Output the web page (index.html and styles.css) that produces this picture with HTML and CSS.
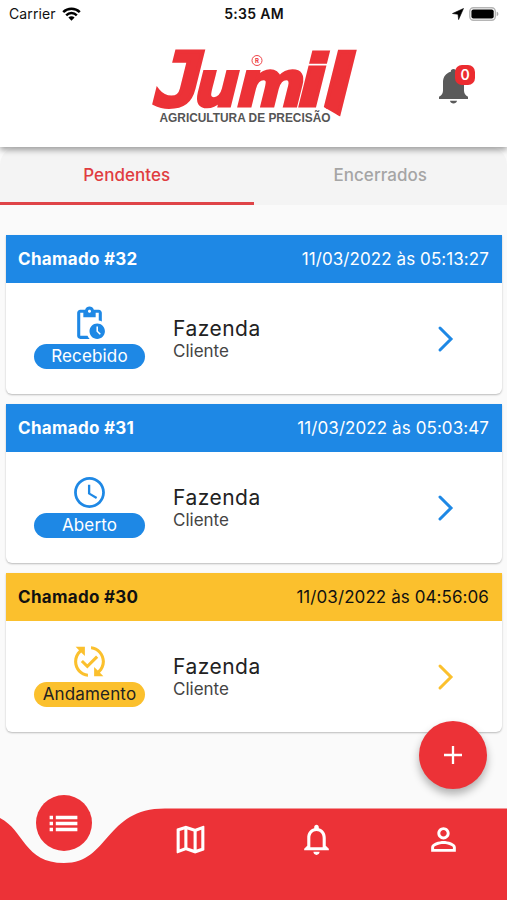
FILE: index.html
```html
<!DOCTYPE html>
<html lang="pt-BR">
<head>
<meta charset="utf-8">
<meta name="viewport" content="width=device-width, initial-scale=1">
<title>Jumil</title>
<link rel="stylesheet" href="styles.css">
</head>
<body>
<div class="app">
  <header class="top">
    <div class="status">
      <div class="carrier"><span>Carrier</span>
        <svg width="19" height="14" viewBox="0 0 19 14"><g fill="none" stroke="#000" stroke-width="2.5"><path d="M1.2 5.1a11.8 11.8 0 0 1 16.6 0"/><path d="M4.2 8.3a7.5 7.5 0 0 1 10.6 0"/></g><path d="M6.4 10.6a4.4 4.4 0 0 1 6.2 0L9.5 13.8z"/></svg>
      </div>
      <div class="time">5:35 AM</div>
      <div class="power">
        <svg width="12" height="12" viewBox="0 0 12 12"><path d="M11.5.5 6.6 11.6 6 6.3.5 5.5z" stroke="#000" stroke-width=".6"/></svg>
        <svg width="31" height="14" viewBox="0 0 31 14"><rect x=".8" y=".8" width="25.5" height="12.4" rx="3.6" fill="#fff" stroke="#b5b5b5" stroke-width="1.4"/><rect x="2.4" y="2.4" width="22.3" height="9.2" rx="2"/><path d="M27.7 4.8c2.2.6 2.2 3.8 0 4.4z" fill="#aaa"/></svg>
      </div>
    </div>
    <div class="brand">
      <svg class="logo" width="210" height="80" viewBox="0 0 210 80">
        <clipPath id="slant"><path d="M0 0H210V82L191 72 172 61H0z"/></clipPath>
        <g class="wordmark">
          <text class="initial" transform="translate(-.5 60.500) skewX(-14) scale(1.020 .95)">J</text>
          <text transform="translate(41 60.500) skewX(-14) scale(.78 .8)">u</text>
          <text transform="translate(83.500 60.500) skewX(-14) scale(.82 .8)">m</text>
          <text transform="translate(143.500 60.500) skewX(-14) scale(1.030 .9)">i</text>
          <g clip-path="url(#slant)"><text transform="translate(166 72) skewX(-14) scale(1.080 1.090)">l</text></g>
        </g>
        <circle cx="107" cy="15.500" r="5" fill="none" stroke="#ec3237" stroke-width=".9"/>
        <text class="reg" x="107" y="17.700" text-anchor="middle">R</text>
        <text class="tagline" x="9.500" y="77" textLength="171" lengthAdjust="spacingAndGlyphs">AGRICULTURA DE PRECISÃO</text>
      </svg>
      <div class="alerts">
        <svg width="30" height="36" viewBox="0 0 30 36"><path fill="#5a5a5a" d="M14.500 0c1.700 0 2.700 1.100 2.700 2.700C22 4 25 7.800 25 13v8.500c0 2.500 1 4.500 4 6.300V30H0v-2.200c3-1.800 4-3.800 4-6.300V13C4 7.800 7 4 11.800 2.700 11.800 1.100 12.800 0 14.500 0zM11 31.800h7c-.5 3.500-6.500 3.500-7 0z"/></svg>
        <span class="badge">0</span>
      </div>
    </div>
  </header>

  <nav class="tabs">
    <div class="tab active">Pendentes</div>
    <div class="tab">Encerrados</div>
  </nav>

  <main class="list">
    <article class="card blue">
      <div class="card-head"><b>Chamado #32</b><span>11/03/2022 às 05:13:27</span></div>
      <div class="card-body">
        <div class="state">
          <svg width="37" height="37" viewBox="0 0 24 24"><path d="M17 12c-2.760 0-5 2.240-5 5s2.240 5 5 5 5-2.240 5-5-2.240-5-5-5zm1.650 7.350L16.500 17.200V14h1v2.790l1.850 1.850-.7.710zM18 3h-3.180C14.400 1.840 13.300 1 12 1s-2.400.84-2.820 2H6c-1.100 0-2 .9-2 2v15c0 1.100.9 2 2 2h6.110c-.59-.57-1.070-1.250-1.420-2H6V5h2v3h8V5h2v5.080c.71.1 1.380.31 2 .6V5c0-1.100-.9-2-2-2zm-6 2c-.55 0-1-.45-1-1s.45-1 1-1 1 .45 1 1-.45 1-1 1z"/></svg>
          <span class="pill">Recebido</span>
        </div>
        <div class="info"><div class="farm">Fazenda</div><div class="client">Cliente</div></div>
        <svg class="chevron" width="18" height="28" viewBox="0 0 18 28"><path d="m3 3 11 11L3 25"/></svg>
      </div>
    </article>
    <article class="card blue">
      <div class="card-head"><b>Chamado #31</b><span>11/03/2022 às 05:03:47</span></div>
      <div class="card-body">
        <div class="state">
          <svg width="37" height="37" viewBox="0 0 24 24"><path d="M11.990 2C6.470 2 2 6.480 2 12s4.470 10 9.990 10C17.520 22 22 17.520 22 12S17.520 2 11.990 2zM12 20.200c-4.530 0-8.200-3.670-8.200-8.200S7.470 3.800 12 3.800s8.200 3.670 8.200 8.200-3.670 8.200-8.200 8.200zM12.500 7H11v6l5.250 3.150.75-1.230-4.500-2.670z"/></svg>
          <span class="pill">Aberto</span>
        </div>
        <div class="info"><div class="farm">Fazenda</div><div class="client">Cliente</div></div>
        <svg class="chevron" width="18" height="28" viewBox="0 0 18 28"><path d="m3 3 11 11L3 25"/></svg>
      </div>
    </article>
    <article class="card yellow">
      <div class="card-head"><b>Chamado #30</b><span>11/03/2022 às 04:56:06</span></div>
      <div class="card-body">
        <div class="state">
          <svg width="37" height="37" viewBox="0 0 24 24"><path d="M17.660 9.530l-7.070 7.070-4.240-4.240 1.410-1.410 2.830 2.830 5.660-5.660 1.410 1.410zM4 12c0-2.330 1.020-4.420 2.620-5.880L9 8.500v-6H3l2.200 2.200C3.240 6.520 2 9.110 2 12c0 5.190 3.950 9.450 9 9.950v-2.020c-3.940-.49-7-3.860-7-7.930zm18 0c0-5.190-3.950-9.450-9-9.950v2.020c3.940.49 7 3.860 7 7.930 0 2.330-1.020 4.420-2.620 5.880L15 15.500v6h6l-2.200-2.200c1.960-1.820 3.200-4.410 3.200-7.300z"/></svg>
          <span class="pill">Andamento</span>
        </div>
        <div class="info"><div class="farm">Fazenda</div><div class="client">Cliente</div></div>
        <svg class="chevron" width="18" height="28" viewBox="0 0 18 28"><path d="m3 3 11 11L3 25"/></svg>
      </div>
    </article>
  </main>

  <button class="fab" aria-label="Novo chamado"><svg width="18" height="18" viewBox="0 0 18 18"><path d="M9 0v18M0 9h18" stroke="#fff" stroke-width="2.300"/></svg></button>

  <footer class="bottom">
    <svg class="wave" width="507" height="92" viewBox="0 0 507 92"><path fill="#ec3237" d="M0 10C24 22 24 55 64 55 110 55 104 .5 165 .5H507V92H0z"/></svg>
    <div class="items">
      <div class="item"><span class="current"><svg width="37" height="37" viewBox="0 0 24 24"><path d="M3 7h2.200v2.200H3zm0 3.900h2.200v2.200H3zm0 3.900h2.200V17H3zM7 7h14v2.200H7zm0 3.900h14v2.200H7zm0 3.900h14V17H7z"/></svg></span></div>
      <div class="item"><svg width="37" height="37" viewBox="0 0 24 24"><path d="M20.500 3l-.16.03L15 5.100 9 3 3.360 4.900c-.21.07-.36.25-.36.48V20.500c0 .28.22.5.5.5l.16-.03L9 18.900l6 2.100 5.640-1.900c.21-.07.36-.25.36-.48V3.500c0-.28-.22-.5-.5-.5zM10 5.470l4 1.400v11.660l-4-1.400V5.470zm-5 .99l3-1.010v11.700l-3 1.160V6.460zm14 11.080l-3 1.010V6.860l3-1.160v11.840z"/></svg></div>
      <div class="item"><svg width="37" height="37" viewBox="0 0 24 24"><path d="M12 22c1.100 0 2-.9 2-2h-4c0 1.100.9 2 2 2zm6-6v-5c0-3.070-1.630-5.640-4.500-6.320V4c0-.83-.67-1.500-1.500-1.500s-1.500.67-1.500 1.500v.68C7.640 5.360 6 7.920 6 11v5l-2 2v1h16v-1l-2-2zm-2 1H8v-6c0-2.480 1.510-4.500 4-4.500s4 2.020 4 4.500v6z"/></svg></div>
      <div class="item"><svg width="37" height="37" viewBox="0 0 24 24"><path d="M12 5.900c1.160 0 2.100.94 2.100 2.100s-.94 2.100-2.100 2.100S9.900 9.160 9.900 8s.94-2.100 2.100-2.100m0 9c2.970 0 6.100 1.460 6.100 2.100v1.100H5.900V17c0-.64 3.130-2.100 6.100-2.100M12 4C9.790 4 8 5.790 8 8s1.790 4 4 4 4-1.790 4-4-1.790-4-4-4zm0 9c-2.670 0-8 1.340-8 4v3h16v-3c0-2.660-5.330-4-8-4z"/></svg></div>
    </div>
  </footer>
</div>
</body>
</html>
```
FILE: styles.css
```css
* { box-sizing: border-box; }
body { margin: 0; font-family: Inter, "Liberation Sans", sans-serif; color: #222; }
svg { display: block; flex: none; }
.app { position: relative; display: flex; flex-direction: column; width: 507px; height: 900px; overflow: hidden; background: #fafafa; }

.top { position: relative; z-index: 1; height: 147px; background: #fff; box-shadow: 0 3px 6px rgba(0,0,0,.36); }
.status { display: grid; grid-template-columns: 1fr auto 1fr; align-items: center; height: 27px; padding: 0 7px 0 9px; color: #111; }
.carrier { display: flex; align-items: center; gap: 6px; font-size: 14px; letter-spacing: .1px; }
.time { font-size: 14px; font-weight: 600; letter-spacing: .3px; transform: translateX(-.5px); }
.power { display: flex; justify-content: flex-end; align-items: center; gap: 5px; }
.brand { display: flex; justify-content: space-between; padding: 18px 32px 0 150px; }
.logo { overflow: visible; }
.wordmark { font: 700 79px "DejaVu Sans", sans-serif; fill: #ec3237; stroke: #ec3237; stroke-width: 3.5px; stroke-linejoin: miter; }
.initial { font-family: "DejaVu Sans Mono", monospace; stroke-width: 4px; }
.reg { font: 700 6px Inter, sans-serif; fill: #ec3237; }
.tagline { font: 700 12px "Liberation Sans", sans-serif; fill: #555; }
.alerts { position: relative; width: 36px; height: 40px; margin-top: 24px; }
.badge { position: absolute; left: 16px; top: -4px; width: 20px; height: 20px; border-radius: 7px; background: #ec2c30; color: #fff; font-size: 14px; font-weight: 600; line-height: 20px; text-align: center; }

.tabs { display: flex; height: 58px; background: #f4f4f4; border-radius: 18px 18px 0 0; }
.tab { flex: 1; border-bottom: 3px solid transparent; color: #a5a5a5; font-size: 17px; font-weight: 500; line-height: 56px; letter-spacing: .05px; text-align: center; }
.tab.active { color: #e03c40; border-color: #df4448; }

.list { display: flex; flex-direction: column; gap: 10px; padding: 30px 5px 0 6px; }
.card { height: 159px; border-radius: 0 0 6px 6px; background: #fff; box-shadow: 0 1px 2px rgba(0,0,0,.26); }
.card-head { display: flex; justify-content: space-between; align-items: center; height: 48px; padding: 0 13px 0 12px; background: var(--tone); color: var(--head); font-size: 17px; }
.card-head b { font-weight: 700; letter-spacing: .3px; }
.card-head span { letter-spacing: .08px; }
.blue { --tone: #1e88e5; --head: #fff; --label: #fff; }
.yellow { --tone: #fbc02d; --head: #111; --label: #222; }
.card-body { display: flex; align-items: center; height: 111px; padding: 0 47px 0 28px; }
.state { display: flex; flex-direction: column; align-items: center; width: 111px; margin-bottom: 4px; fill: var(--tone); }
.pill { width: 111px; height: 25px; margin-top: 2px; border-radius: 13px; background: var(--tone); color: var(--label); font-size: 17px; line-height: 25px; letter-spacing: .15px; text-align: center; }
.info { flex: 1; margin-left: 28px; }
.farm { font-size: 21px; line-height: 25px; letter-spacing: .5px; color: #222; }
.client { font-size: 17px; line-height: 20px; color: #444; }
.chevron path { fill: none; stroke: var(--tone); stroke-width: 3px; stroke-linecap: round; stroke-linejoin: miter; }

.fab { position: absolute; left: 419px; top: 721px; display: flex; align-items: center; justify-content: center; width: 68px; height: 68px; padding: 0; border: 0; border-radius: 50%; background: #ec3237; box-shadow: 0 5px 9px rgba(0,0,0,.3); }
.bottom { position: absolute; left: 0; bottom: 0; width: 507px; height: 92px; }
.wave { position: absolute; left: 0; top: 0; }
.items { position: relative; display: flex; padding-top: 13px; fill: #fff; }
.item { flex: 1; display: flex; justify-content: center; }
.current { display: flex; align-items: center; justify-content: center; width: 56px; height: 56px; margin: -26px 0 0 1px; border-radius: 50%; background: #ec3237; }
```
